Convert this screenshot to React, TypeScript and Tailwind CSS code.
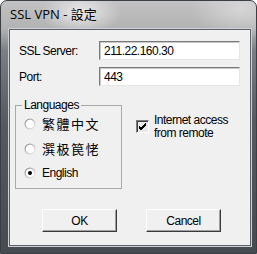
import React from 'react';

const uiFont = "[font-family:'Liberation_Sans',Arial,sans-serif] tracking-[-0.5px]";

function Radio({ checked }: { checked?: boolean }) {
  return (
    <svg width="12" height="12" viewBox="0 0 12 12" className="shrink-0">
      <defs>
        <linearGradient id="rg" x1="0" y1="0" x2="1" y2="1">
          <stop offset="0" stopColor="#8a8a8a" />
          <stop offset="1" stopColor="#f4f4f4" />
        </linearGradient>
      </defs>
      <circle cx="6" cy="6" r="5.5" fill="url(#rg)" />
      <circle cx="6" cy="6" r="4.3" fill="#ffffff" />
      {checked && <circle cx="6" cy="6" r="2" fill="#000000" />}
    </svg>
  );
}

function Field({ label, value }: { label: string; value: string }) {
  return (
    <div className="flex items-center h-[19px]">
      <span className="w-[89px] pl-[9px] text-[12px] leading-none text-black">{label}</span>
      <div className="w-[141px] h-[19px] bg-white border border-t-[#7a7a7a] border-l-[#7a7a7a] border-r-[#e6e6e6] border-b-[#e6e6e6] shadow-[inset_1px_1px_0_#c8c8c8] flex items-center pl-[4px] text-[12px] leading-none text-black">
        {value}
      </div>
    </div>
  );
}

function Button({ children }: { children: React.ReactNode }) {
  return (
    <button className="w-[75px] h-[23px] bg-[#f0f0f0] border border-t-white border-l-white border-r-[#3a3a3a] border-b-[#3a3a3a] shadow-[inset_-1px_-1px_0_#a0a0a0] text-[12px] leading-none text-black">
      {children}
    </button>
  );
}

export default function App() {
  return (
    <div className="w-[257px] h-[254px] overflow-hidden rounded-t-[7px] border border-[#3a3f45] flex flex-col bg-[radial-gradient(ellipse_40px_22px_at_80px_12px,rgba(255,255,255,0.7),transparent),radial-gradient(ellipse_50px_30px_at_240px_8px,rgba(230,230,230,0.6),transparent),linear-gradient(180deg,#c2c2c2_0px,#b2b2b2_28px,#7a7f85_50px,#555b61_120px,#454b51_253px)]">
      <div className="h-[28px] flex items-center pl-[9px] text-[13px] text-black [font-family:'Open_Sans','Noto_Sans_CJK_TC',sans-serif]">
        SSL VPN - 設定
      </div>
      <div className={`ml-[8px] w-[242px] h-[217px] bg-[#f0f0f0] border border-[#5d6268] shadow-[0_0_0_1px_#cdd1d5] flex flex-col ${uiFont}`}>
        <div className="pt-[11px] flex flex-col gap-[7px]">
          <Field label="SSL Server:" value="211.22.160.30" />
          <Field label="Port:" value="443" />
        </div>
        <div className="mt-[13px] flex items-start">
          <fieldset className="ml-[5px] w-[107px] h-[90px] border border-[#a9a9a9]">
            <legend className="ml-[6px] px-[2px] text-[12px] leading-[13px] text-black">Languages</legend>
            <div className="flex flex-col pl-[8px]">
              <label className="flex items-center gap-[6px] h-[24px]">
                <Radio />
                <span className="text-[13px] tracking-[1.5px] [font-family:'Noto_Sans_CJK_TC',sans-serif]">繁體中文</span>
              </label>
              <label className="flex items-center gap-[6px] h-[25px]">
                <Radio />
                <span className="text-[13px] tracking-[1.5px] [font-family:'Noto_Sans_CJK_TC',sans-serif]">潠极笢恅</span>
              </label>
              <label className="flex items-center gap-[6px] h-[24px]">
                <Radio checked />
                <span className="text-[12px]">English</span>
              </label>
            </div>
          </fieldset>
          <div className="ml-[14px] mt-[15px] flex items-start gap-[5px]">
            <div className="w-[13px] h-[13px] mt-[6px] shrink-0 bg-[#e8e8e8] border border-t-[#7a7a7a] border-l-[#7a7a7a] border-r-white border-b-white shadow-[inset_1px_1px_0_#404040] flex items-center justify-center">
              <svg width="9" height="9" viewBox="0 0 9 9">
                <path d="M1 4 L3 6 L8 1 M1 5 L3 7 L8 2 M1 6 L3 8 L8 3" stroke="#000" strokeWidth="1" fill="none" />
              </svg>
            </div>
            <span className="text-[12px] leading-[13px] text-black">
              Internet access
              <br />
              from remote
            </span>
          </div>
        </div>
        <div className="mt-[20px] flex pl-[32px] gap-[29px]">
          <Button>OK</Button>
          <Button>Cancel</Button>
        </div>
      </div>
    </div>
  );
}
